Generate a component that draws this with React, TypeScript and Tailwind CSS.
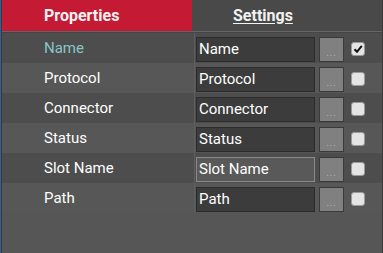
import { FC } from "react";

interface RowProps {
  label: string;
  index: number;
  checked?: boolean;
  active?: boolean;
  focused?: boolean;
}

const rows = [
  { label: "Name", checked: true, active: true },
  { label: "Protocol" },
  { label: "Connector" },
  { label: "Status" },
  { label: "Slot Name", focused: true },
  { label: "Path" },
];

const Row: FC<RowProps> = ({ label, index, checked, active, focused }) => {
  const dark = index % 2 === 0;
  return (
    <div className={`flex h-[30px] ${dark ? "bg-[#4d4d4d]" : "bg-[#575757]"}`}>
      <div className={`w-[192px] pl-[42px] flex items-center text-[15px] ${active ? "text-[#8ac4c8]" : "text-white"}`}>
        {label}
      </div>
      <div className="w-px bg-[#5e5e5e]" />
      <div className="flex flex-1 items-start pt-[4px] pl-px">
        <div
          className={`w-[119px] h-[25px] flex items-center px-[2px] text-[15px] text-white border ${
            focused ? "bg-[#595959] border-[#8a8a8a]" : "bg-[#3c3c3c] border-[#2c2c2c]"
          }`}
        >
          {label}
        </div>
        <div className="ml-[4px] w-[25px] h-[25px] bg-[#808080] border border-[#3a3a3a] flex items-center justify-center pt-[7px] text-[9px] leading-none text-[#c4c4c4] tracking-[1px]">
          ...
        </div>
        <div className="ml-[7px] mt-[5px] w-[14px] h-[14px] rounded-[3px] bg-[#e4e4e4] border border-[#9a9a9a] flex items-center justify-center">
          {checked && (
            <svg width="10" height="10" viewBox="0 0 10 10">
              <path d="M1.5 5.2 L4 7.8 L8.8 1.8" fill="none" stroke="#111" strokeWidth="2" />
            </svg>
          )}
        </div>
      </div>
    </div>
  );
};

const App: FC = () => {
  return (
    <div
      className="w-[383px] h-[253px] flex bg-[#565656] overflow-hidden"
      style={{ fontFamily: "Roboto, 'Liberation Sans', sans-serif" }}
    >
      <div className="w-px bg-[#2f5f9e]" />
      <div className="w-px bg-[#3a3a3a]" />
      <div className="flex-1 flex flex-col">
        <div className="flex h-[31px]">
          <div className="w-[190px] bg-[#c41a33] pl-[42px] flex items-center text-[16px] font-bold text-[#f2f2f2]">
            Properties
          </div>
          <div className="flex-1 bg-[#494949] pl-[41px] flex items-center text-[16px] font-bold text-[#f2f2f2] underline underline-offset-2">
            Settings
          </div>
        </div>
        <div className="h-px bg-[#656565]" />
        <div className="h-px bg-[#454545]" />
        {rows.map((r, i) => (
          <Row key={r.label} index={i} label={r.label} checked={r.checked} active={r.active} focused={r.focused} />
        ))}
      </div>
      <div className="w-px bg-[#3a3a3a]" />
    </div>
  );
};

export default App;
